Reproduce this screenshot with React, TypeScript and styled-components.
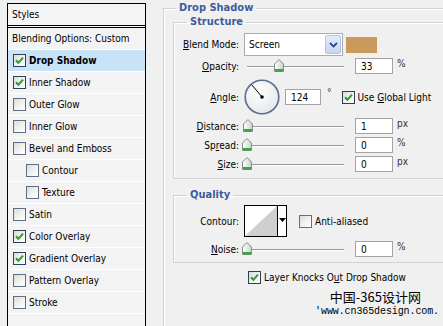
import React from "react";
import styled, { createGlobalStyle } from "styled-components";

const GlobalStyle = createGlobalStyle`
  html, body {
    margin: 0;
    padding: 0;
  }
  body {
    width: 443px;
    height: 326px;
    overflow: hidden;
    background: #f0f0f0;
    font-family: "DejaVu Sans Condensed", "Liberation Sans", sans-serif;
    font-size: 10px;
    color: #000;
  }
`;

interface StyleItem {
  label: string;
  checked?: boolean;
  active?: boolean;
  indent?: boolean;
}

const styleItems: StyleItem[] = [
  { label: "Drop Shadow", checked: true, active: true },
  { label: "Inner Shadow", checked: true },
  { label: "Outer Glow" },
  { label: "Inner Glow" },
  { label: "Bevel and Emboss" },
  { label: "Contour", indent: true },
  { label: "Texture", indent: true },
  { label: "Satin" },
  { label: "Color Overlay", checked: true },
  { label: "Gradient Overlay", checked: true },
  { label: "Pattern Overlay" },
  { label: "Stroke" },
];

const Check: React.FC<{ checked?: boolean }> = ({ checked }) => (
  <StyledCheck $checked={checked}>
    {checked && (
      <svg width="9" height="9" viewBox="0 0 9 9">
        <path
          d="M1 4.3 L3.4 6.8 L8 1.6"
          stroke="#2a9d2a"
          strokeWidth="2"
          fill="none"
        />
      </svg>
    )}
  </StyledCheck>
);

const Slider: React.FC<{ value: number }> = ({ value }) => (
  <StyledSlider>
    <StyledTrack />
    <StyledThumb style={{ left: 3 + (value / 100) * 97 - 5 }}>
      <svg width="10" height="13" viewBox="0 0 10 13">
        <defs>
          <linearGradient id="thumbFill" x1="0" y1="0" x2="1" y2="0">
            <stop offset="0" stopColor="#ffffff" />
            <stop offset="1" stopColor="#c9d3c9" />
          </linearGradient>
        </defs>
        <path
          d="M0.5 5 L5 0.5 L9.5 5 L9.5 12.5 L0.5 12.5 Z"
          fill="url(#thumbFill)"
          stroke="#7f8f80"
        />
        <rect x="1" y="10" width="8" height="2.5" fill="#3fa34a" />
      </svg>
    </StyledThumb>
  </StyledSlider>
);

const Dial: React.FC<{ angle: number }> = ({ angle }) => {
  const r = (angle * Math.PI) / 180;
  const x = 18 + Math.cos(r) * 16;
  const y = 18 - Math.sin(r) * 16;
  return (
    <svg width="37" height="36" viewBox="0 0 37 36">
      <defs>
        <radialGradient id="dialFill" cx="0.4" cy="0.35" r="0.7">
          <stop offset="0" stopColor="#ffffff" />
          <stop offset="1" stopColor="#e4e6ea" />
        </radialGradient>
      </defs>
      <circle
        cx="18"
        cy="18"
        r="16.8"
        fill="url(#dialFill)"
        stroke="#5c6d8e"
        strokeWidth="1.6"
      />
      <line x1="18" y1="18" x2={x} y2={y} stroke="#000" strokeWidth="1" />
      <circle cx="18" cy="18" r="1.8" fill="#000" />
    </svg>
  );
};

const NumField: React.FC<{ value: string; unit: string }> = ({
  value,
  unit,
}) => (
  <>
    <StyledInput>{value}</StyledInput>
    <StyledUnit>{unit}</StyledUnit>
  </>
);

const App: React.FC = () => (
  <>
    <GlobalStyle />
    <StyledPage>
      <StyledList>
        <StyledListHead>Styles</StyledListHead>
        <StyledListItem>Blending Options: Custom</StyledListItem>
        {styleItems.map((item) => (
          <StyledListItem
            key={item.label}
            $active={item.active}
            $indent={item.indent}
          >
            <Check checked={item.checked} />
            <span>{item.label}</span>
          </StyledListItem>
        ))}
      </StyledList>

      <StyledMain>
        <StyledGroup $outer>
          <StyledLegend>Drop Shadow</StyledLegend>
          <StyledGroup>
            <StyledLegend $inner>Structure</StyledLegend>

            <StyledRow $top={4} $h={23}>
              <StyledLabel>
                <u>B</u>lend Mode:
              </StyledLabel>
              <StyledControls>
                <StyledSelect>
                  <span>Screen</span>
                  <StyledSelectButton>
                    <svg width="9" height="6" viewBox="0 0 9 6">
                      <path
                        d="M1 1 L4.5 4.5 L8 1"
                        stroke="#2c4c88"
                        strokeWidth="1.8"
                        fill="none"
                      />
                    </svg>
                  </StyledSelectButton>
                </StyledSelect>
                <StyledSwatch />
              </StyledControls>
            </StyledRow>

            <StyledRow $top={2} $h={16}>
              <StyledLabel>
                <u>O</u>pacity:
              </StyledLabel>
              <StyledControls>
                <Slider value={33} />
                <NumField value="33" unit="%" />
              </StyledControls>
            </StyledRow>

            <StyledRow $top={5} $h={36}>
              <StyledLabel>
                <u>A</u>ngle:
              </StyledLabel>
              <StyledControls>
                <Dial angle={130} />
                <StyledInput $w={36} $gap={4}>
                  124
                </StyledInput>
                <StyledUnit $gap={6}>°</StyledUnit>
                <StyledCheckLabel $gap={10}>
                  <Check checked />
                  <span>
                    Use <u>G</u>lobal Light
                  </span>
                </StyledCheckLabel>
              </StyledControls>
            </StyledRow>

            <StyledRow $top={3} $h={16}>
              <StyledLabel>
                <u>D</u>istance:
              </StyledLabel>
              <StyledControls>
                <Slider value={1} />
                <NumField value="1" unit="px" />
              </StyledControls>
            </StyledRow>

            <StyledRow $top={3} $h={16}>
              <StyledLabel>
                Sp<u>r</u>ead:
              </StyledLabel>
              <StyledControls>
                <Slider value={0} />
                <NumField value="0" unit="%" />
              </StyledControls>
            </StyledRow>

            <StyledRow $top={3} $h={16} $bottom={6}>
              <StyledLabel>
                <u>S</u>ize:
              </StyledLabel>
              <StyledControls>
                <Slider value={0} />
                <NumField value="0" unit="px" />
              </StyledControls>
            </StyledRow>
          </StyledGroup>

          <StyledGroup $gapTop={9}>
            <StyledLegend $inner>Quality</StyledLegend>

            <StyledRow $top={3} $h={32}>
              <StyledLabel>Contour:</StyledLabel>
              <StyledControls>
                <StyledContour>
                  <svg width="32" height="30" viewBox="0 0 32 30">
                    <rect width="32" height="30" fill="#ffffff" />
                    <path d="M0 30 L32 0 L32 30 Z" fill="#cfcfcf" />
                  </svg>
                  <StyledContourArrow>
                    <svg width="7" height="4" viewBox="0 0 7 4">
                      <path d="M0 0 L7 0 L3.5 4 Z" fill="#000" />
                    </svg>
                  </StyledContourArrow>
                </StyledContour>
                <StyledCheckLabel $gap={12}>
                  <Check />
                  <span>Anti-aliased</span>
                </StyledCheckLabel>
              </StyledControls>
            </StyledRow>

            <StyledRow $top={4} $h={16} $bottom={5}>
              <StyledLabel>
                <u>N</u>oise:
              </StyledLabel>
              <StyledControls>
                <Slider value={0} />
                <NumField value="0" unit="%" />
              </StyledControls>
            </StyledRow>
          </StyledGroup>

          <StyledKnockout>
            <Check checked />
            <span>
              Layer Knocks O<u>u</u>t Drop Shadow
            </span>
          </StyledKnockout>
        </StyledGroup>
      </StyledMain>

      <StyledWatermark>
        <StyledWatermarkCn>中国-365设计网</StyledWatermarkCn>
        <StyledWatermarkUrl>'www.cn365design.com.</StyledWatermarkUrl>
      </StyledWatermark>
    </StyledPage>
  </>
);

export default App;

const StyledPage = styled.div`
  position: relative;
  display: flex;
  align-items: flex-start;
  width: 443px;
  height: 326px;
  padding: 3px 0 0 7px;
  box-sizing: border-box;
  overflow: hidden;
`;

const StyledList = styled.div`
  flex: none;
  width: 139px;
  height: 340px;
  box-sizing: border-box;
  border: 1px solid #000;
  background: #f3f3f3;
`;

const StyledListHead = styled.div`
  display: flex;
  align-items: center;
  height: 21px;
  padding-left: 4px;
  border-bottom: 3px double #000;
  background: #f5f5f5;
`;

const StyledListItem = styled.div<{ $active?: boolean; $indent?: boolean }>`
  display: flex;
  align-items: center;
  gap: 3px;
  height: 21px;
  padding-left: ${(p) => (p.$indent ? 18 : 5)}px;
  border-bottom: 1px solid #ffffff;
  background: ${(p) => (p.$active ? "#c8e2f6" : "transparent")};
  font-weight: ${(p) => (p.$active ? 700 : 400)};
  white-space: nowrap;

  &:nth-child(2) {
    padding-left: 4px;
  }
`;

const StyledCheck = styled.span<{ $checked?: boolean }>`
  display: inline-flex;
  align-items: center;
  justify-content: center;
  flex: none;
  width: 13px;
  height: 13px;
  box-sizing: border-box;
  border: 1px solid ${(p) => (p.$checked ? "#2b405a" : "#5d6f86")};
  background: linear-gradient(135deg, #dcdcd6 0%, #f4f4f2 60%, #ffffff 100%);
`;

const StyledMain = styled.div`
  flex: none;
  width: 310px;
  margin-left: 17px;
  margin-top: -2px;
`;

const StyledGroup = styled.fieldset<{ $outer?: boolean; $gapTop?: number }>`
  margin: ${(p) => p.$gapTop ?? 0}px ${(p) => (p.$outer ? 0 : -20)}px 0 0;
  padding: 0 0 0 ${(p) => (p.$outer ? 9 : 0)}px;
  min-width: 0;
  min-height: ${(p) => (p.$outer ? 360 : 0)}px;
  border: 1px solid #d2d2d2;
  box-shadow: inset 1px 1px 0 #ffffff;
`;

const StyledLegend = styled.legend<{ $inner?: boolean }>`
  margin-left: ${(p) => (p.$inner ? 13 : 3)}px;
  padding: 0 3px;
  line-height: 14px;
  font-size: 11px;
  font-weight: 700;
  color: #3d5c9b;
`;

const StyledRow = styled.div<{ $top: number; $h: number; $bottom?: number }>`
  display: grid;
  grid-template-columns: 65px auto;
  column-gap: 5px;
  align-items: center;
  height: ${(p) => p.$h}px;
  margin-top: ${(p) => p.$top}px;
  margin-bottom: ${(p) => p.$bottom ?? 0}px;
`;

const StyledLabel = styled.span`
  text-align: right;
  white-space: nowrap;
`;

const StyledControls = styled.div`
  display: flex;
  align-items: center;
  height: 100%;
`;

const StyledSelect = styled.div`
  display: flex;
  align-items: center;
  justify-content: space-between;
  width: 99px;
  height: 23px;
  box-sizing: border-box;
  padding-left: 4px;
  border: 1px solid #a5acb5;
  background: #ffffff;
`;

const StyledSelectButton = styled.span`
  display: flex;
  align-items: center;
  justify-content: center;
  width: 16px;
  height: 19px;
  margin-right: 1px;
  box-sizing: border-box;
  border: 1px solid #b5c4de;
  border-radius: 2px;
  background: linear-gradient(180deg, #e3ebfa 0%, #c8d6f2 100%);
`;

const StyledSwatch = styled.span`
  width: 31px;
  height: 16px;
  margin-left: 3px;
  background: #c99a5b;
`;

const StyledSlider = styled.div`
  position: relative;
  width: 103px;
  height: 16px;
`;

const StyledTrack = styled.div`
  position: absolute;
  left: 3px;
  right: 3px;
  top: 8px;
  height: 1px;
  background: #9a9a9a;
  box-shadow: 0 1px 0 #ffffff;
`;

const StyledThumb = styled.div`
  position: absolute;
  top: 1px;
  width: 10px;
  height: 13px;
  line-height: 0;
`;

const StyledInput = styled.span<{ $w?: number; $gap?: number }>`
  display: flex;
  align-items: center;
  width: ${(p) => p.$w ?? 38}px;
  height: 16px;
  margin-left: ${(p) => p.$gap ?? 8}px;
  padding-left: 5px;
  box-sizing: border-box;
  border: 1px solid #a3a3a3;
  background: #ffffff;
`;

const StyledUnit = styled.span<{ $gap?: number }>`
  align-self: flex-start;
  margin-top: ${(p) => (p.$gap ? 8 : 0)}px;
  margin-left: ${(p) => p.$gap ?? 4}px;
  color: #333;
`;

const StyledCheckLabel = styled.label<{ $gap: number }>`
  display: flex;
  align-items: center;
  gap: 3px;
  margin-left: ${(p) => p.$gap}px;
  white-space: nowrap;
`;

const StyledContour = styled.div`
  display: flex;
  width: 43px;
  height: 32px;
  box-sizing: border-box;
  border: 1px solid #000;
  background: #ffffff;
`;

const StyledContourArrow = styled.span`
  display: flex;
  justify-content: center;
  flex: 1;
  padding-top: 12px;
  border-left: 1px solid #000;
`;

const StyledKnockout = styled.label`
  display: flex;
  align-items: center;
  gap: 3px;
  height: 14px;
  margin-top: 7px;
  padding-left: 75px;
  white-space: nowrap;
`;

const StyledWatermark = styled.div`
  position: absolute;
  left: 315px;
  top: 289px;
  display: flex;
  flex-direction: column;
  align-items: flex-end;
  width: 124px;
`;

const StyledWatermarkCn = styled.span`
  margin-right: 18px;
  font-family: "Noto Sans CJK SC", sans-serif;
  font-size: 13px;
  line-height: 16px;
`;

const StyledWatermarkUrl = styled.span`
  font-family: "Liberation Mono", monospace;
  font-size: 10px;
  line-height: 14px;
  letter-spacing: -0.1px;
`;
